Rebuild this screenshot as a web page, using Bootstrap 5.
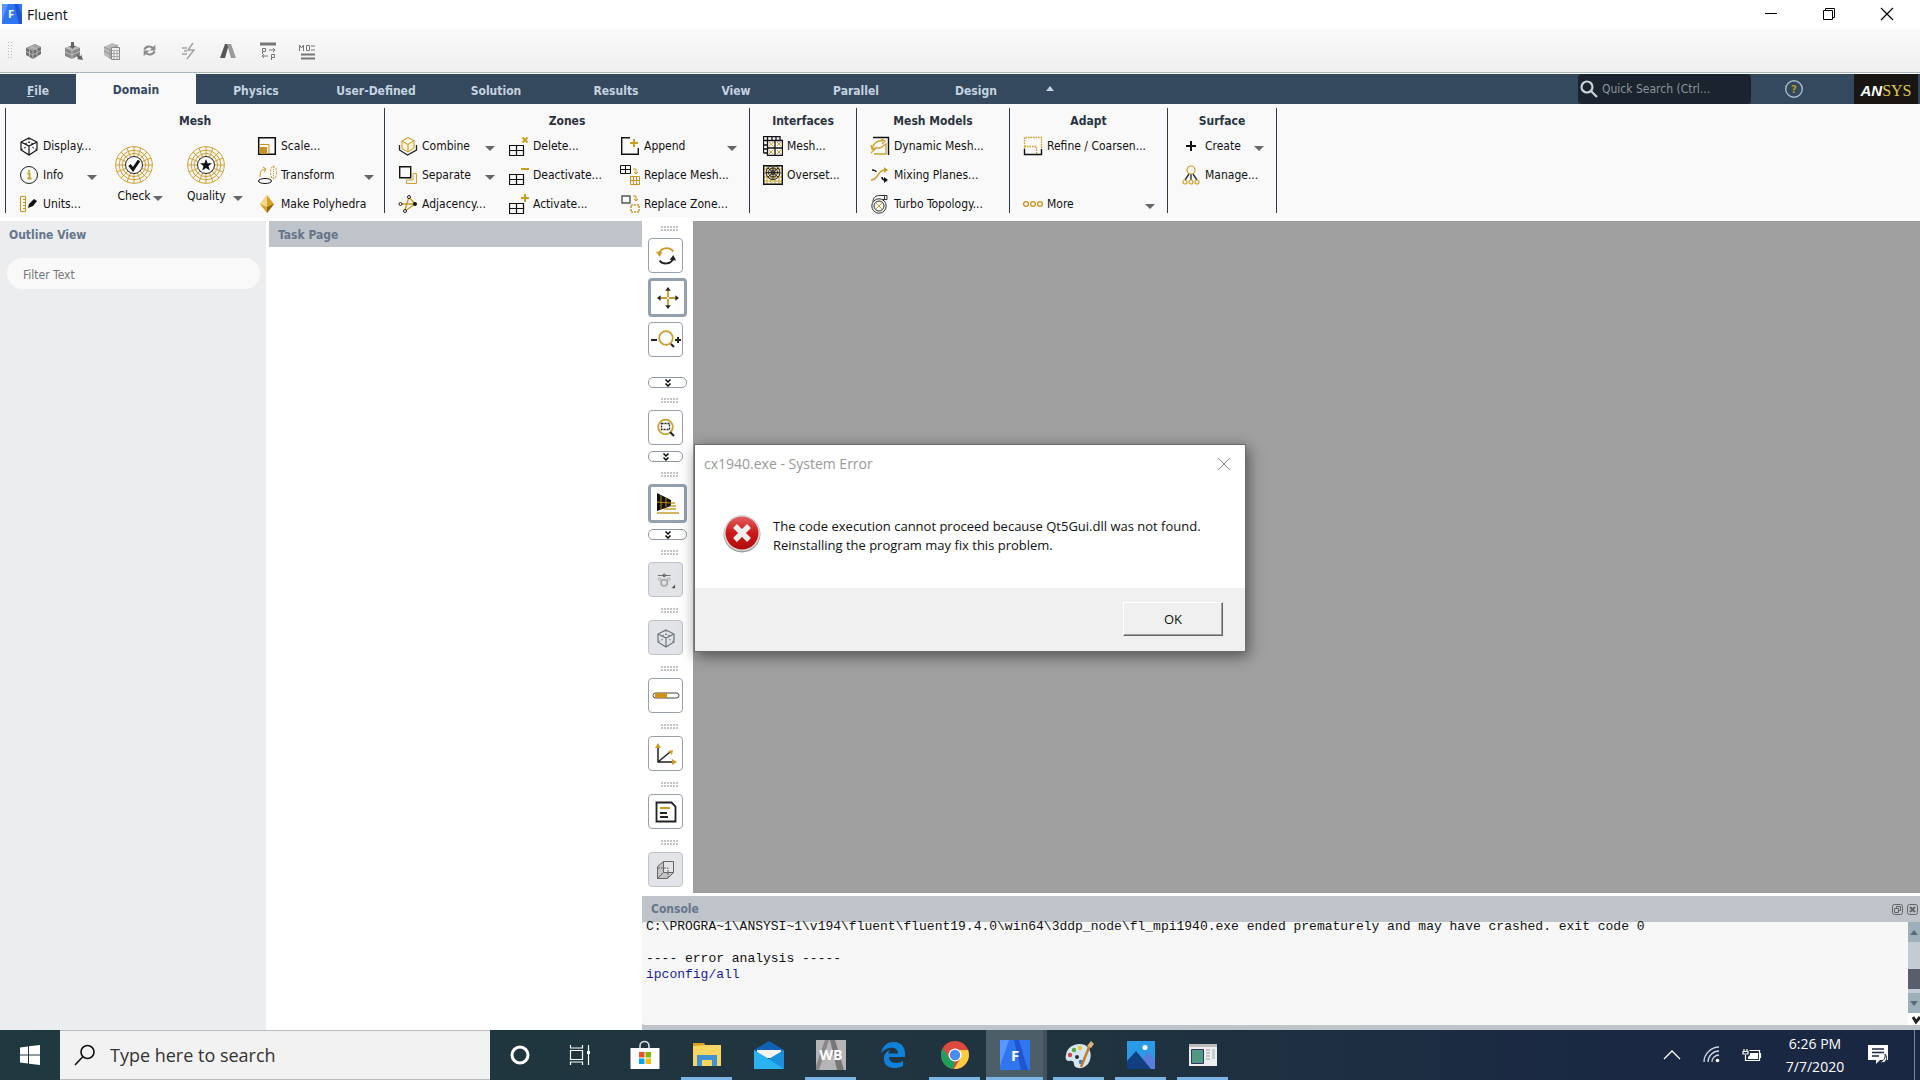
<!DOCTYPE html>
<html lang="en">
<head>
<meta charset="utf-8">
<meta name="viewport" content="width=device-width, initial-scale=1">
<title>Fluent</title>
<link href="https://cdn.jsdelivr.net/npm/bootstrap@5.3.0/dist/css/bootstrap.min.css" rel="stylesheet">
<style>
:root{--navy:#34495e;--gold:#c8921c;--ui:"DejaVu Sans Condensed","DejaVu Sans",sans-serif;--win:"Open Sans","Noto Sans",sans-serif}
body{font-family:var(--ui);font-size:12px;line-height:16px;color:#111;background:#fff;height:100vh;overflow:hidden}
button,input{font:inherit;color:inherit}
button{background:none;border:0;padding:0;text-align:left;white-space:nowrap}
svg{display:block;flex:none;fill:none}
a{text-decoration:none}
/* title bar */
.title-bar{height:29px;padding-left:2px;font-family:var(--win);font-size:14px}
.title-text{line-height:20px;padding:5px 0 0 5px}
.win-btn{width:58px;height:28px;display:flex;align-items:center;justify-content:center}
/* quick toolbar */
.quick-bar{height:44px;background:linear-gradient(#fafafa,#efefef);border-bottom:1px solid #a9b5bf;padding-left:3px;margin-bottom:1px}
.quick-bar button{width:39px;color:#8b8b8b}
/* tabs */
.tab-bar{height:30px;background:var(--navy);font-weight:700}
.tab-bar .tab-link{width:120px;height:30px;padding-top:3px;color:#c5d3e0;display:flex;align-items:center;justify-content:center;font-size:12px}
.tab-bar .tab-file{width:76px}
.tab-bar .tab-link.active{background:#f9f9f9;color:var(--navy);padding-top:2px}
.quick-search{width:173px;height:30px;background:#1a232e;border-radius:4px;padding-left:2px;margin-right:33px}
.quick-search input,.task-search input,.filter-box{background:none;border:0;outline:0;min-width:0}
.quick-search input::placeholder{color:#8d949b;opacity:1}
.quick-search input{font-weight:400}
.brand-box{width:64px;height:30px;padding-top:3px;background:#191513;margin:0 2px 0 50px;font:italic 700 15px/30px "Liberation Sans",sans-serif;color:#fff;align-items:center;justify-content:center}
.brand-box span{font:400 16px/30px "Liberation Serif",serif;color:#dcc94b}
/* ribbon */
.ribbon{height:114px;background:#f9f9f9;padding:4px 0 6px 5px;margin-bottom:3px}
.rib-group{border-left:1px solid #2d3948;padding-left:13px;height:105px}
.rib-group h2{font-size:12px;line-height:26px;font-weight:700;color:#2b3340;text-align:center;margin:0 13px 2px 0}
.rib-end{border-left:1px solid #2d3948;height:105px}
.g-mesh{width:379px}.g-zones{width:365px}.g-inter{width:107px}.g-models{width:153px}.g-adapt{width:158px}.g-surf{width:109px}
.rib-col{display:flex;flex-direction:column;gap:9px}
.w-info{width:78px}.w-xform{width:117px}.w-comb{width:97px}
.rib-btn{display:flex;align-items:center;height:20px;gap:4px}
.rib-btn svg.ico{width:20px;height:20px}
.caret-dn{width:0;height:0;border:5px solid transparent;border-top-color:#666;border-bottom:0;margin:5px 0 0 auto}
.big-tools{gap:24px;padding:0 22px 0 18px}
.big-tool{display:grid;grid-template-columns:38px 10px;grid-template-rows:38px 24px;padding-top:10px;align-items:center;height:78px}
.big-tool span{grid-column:1;text-align:center}
.big-tool i{margin-left:0}
.big-tool.q i{margin-left:8px}
.zone-cols{gap:14px}
/* panels */
.panel-title{height:26px;line-height:20px;background:#bfc4cb;color:#66758a;font-weight:700;padding-left:9px;font-size:12px}
.outline{width:266px;background:#ebedef;margin-right:3px}
.outline .panel-title{background:none}
.filter-box{display:block;width:253px;height:31px;background:#f9f9f9;border-radius:16px;margin:11px 0 0 7px;padding:2px 16px 0}
.filter-box::placeholder{color:#777;opacity:1}
.task-page{width:373px}
.tool-strip{width:51px;padding:5px 0 0 6px}
.grip{width:17px;height:6px;margin-left:13px;background:radial-gradient(circle at 1px 1px,#c4c4c4 1px,transparent 1px) 0 0/3px 3px}
.sq{width:35px;height:35px;border:1px solid #98a1ab;border-radius:4px;display:flex;align-items:center;justify-content:center;background:#fff}
.sq.on{width:39px;height:39px;border:3px solid #93a1af}
.sq.off{background:#e3e4e7;border-color:#bfc4ca}
.more-bar{width:39px;height:11px;border:1px solid #8f98a2;border-radius:5px;display:flex;align-items:center;justify-content:center;background:#fff}
.more-bar.sm{width:35px}
.strip-group{display:flex;flex-direction:column;gap:6px;margin-bottom:11px}
.strip-group.multi{margin-bottom:10px}
.strip-group .sq+.sq{margin-top:-1px}
.strip-group.first .more-bar{margin-top:14px}
.canvas-area{background:#a0a0a0;margin-bottom:3px}
/* console */
.console-box{height:134px;background:#bfc4cb;padding-bottom:5px}
.console-box .panel-title{line-height:26px;padding:0 2px 0 9px}
.console-text{background:#f7f7f7;font:13px/16px "Liberation Mono",monospace;margin:0;padding:0 4px;border-radius:3px 0 0 3px;color:#111}
.console-text div{margin-top:-3px;white-space:pre}
.console-text .cmd{color:#1c1c9c}
.scroll-col{width:12px;background:#c3ccd3}
.scroll-col .end{height:20px;background:#9eb0b9;display:flex;align-items:center;justify-content:center}
.scroll-col .thumb{height:20px;background:#595e6e}
/* error dialog */
.err-dialog{position:absolute;left:1px;top:223px;width:552px;height:208px;background:#fff;border:1px solid #6d6d6d;box-shadow:2px 4px 14px rgba(0,0,0,.5);font-family:var(--win)}
.err-head{height:38px;padding:0 14px 0 9px;font-size:14px;color:#999}
.err-msg{height:105px;padding:30px 0 0 28px;font-size:13px;line-height:19px;color:#111}
.err-foot{background:#f0f0f0;padding:14px 22px 0 0}
.err-foot button{width:100px;height:34px;text-align:center;font-size:13px;background:#f0f0f0;border:1px solid;border-color:#fff #666 #666 #fff;box-shadow:inset -1px -1px #a0a0a0}
/* taskbar */
.win-taskbar{height:50px;background:linear-gradient(90deg,#20383f 0,#20343f 55%,#1a2843 85%,#1a2743);font-family:var(--win);color:#fff}
.win-taskbar button{display:flex;align-items:center;justify-content:center;height:50px;width:62px}
.win-taskbar .w60{width:60px}
.task-search{width:430px;height:50px;background:#f2f2f2;border:1px solid #b9bdc0;border-width:1px 0;padding-left:14px;color:#222}
.task-search input{font-size:18px;width:300px;margin-left:14px}
.task-search input::placeholder{color:#333;opacity:1}
.win-taskbar .run{position:relative}
.win-taskbar .run::after{content:"";position:absolute;left:5px;right:6px;bottom:0;height:3px;background:#7db4e6}
.win-taskbar .cur{background:#4c5e67;width:61px;margin-right:1px;border-right:4px solid #42525c}
.win-taskbar .cur::after{left:0;right:0}
.clock{width:86px;padding-top:2px;font-size:14px;line-height:23px;text-align:center}
.win-taskbar .w40{width:40px}
.show-desk{width:6px;height:50px;border-left:1px solid #7d8696}
</style>
<script src="https://cdn.jsdelivr.net/npm/bootstrap@5.3.0/dist/js/bootstrap.bundle.min.js"></script>
</head>
<body class="d-flex flex-column">

<svg width="0" height="0" class="position-absolute" aria-hidden="true">
  <symbol id="wheel" viewBox="0 0 38 38"><g fill="none" stroke="#d0a030"><circle cx="19" cy="19" r="18.3"/><circle cx="19" cy="19" r="14.8"/><circle cx="19" cy="19" r="11.6"/><path d="M19 .7V10M19 28v9.300M.7 19H10M28 19h9.300M6 6l7 7M25 25l7 7M32 6l-7 7M13 25l-7 7M12 2l3.500 9M26 2l-3.500 9M12 36l3.500-9M26 36l-3.500-9M2 12l9 3.500M2 26l9-3.500M36 12l-9 3.500M36 26l-9-3.500"/></g><circle cx="19" cy="19" r="8.500" fill="#fff" stroke="#222"/></symbol>
  <symbol id="grid4" viewBox="0 0 20 20"><path d="M.5 9.500h14v10H.5zM7.500 9.500v10M.5 14.500h14" fill="none" stroke="#111" stroke-width="1.200"/></symbol>
  <symbol id="chev2" viewBox="0 0 8 8"><path d="M1.500 .5L4 3 6.500.5M1.500 4.500L4 7l2.500-2.500" fill="none" stroke="#000" stroke-width="1.500"/></symbol>
  <symbol id="cube" viewBox="0 0 20 20"><path d="M10 2l8 4v8l-8 5-8-5V6zM2 6l8 4 8-4M10 10v9" fill="none" stroke="currentColor" stroke-width="1.200"/><path d="M10 2v5M2 14l5-3M18 14l-5-3M6 8l4-2 4 2" fill="none" stroke="currentColor" stroke-dasharray="2 1.500"/></symbol>
</svg>

<header class="title-bar d-flex align-items-start">
  <svg class="mt-1" width="20" height="20" viewBox="0 0 20 20"><path fill="#2f76f0" d="M0 0h20v20H0z"/><path fill="#5a97fa" d="M0 0h6L0 17z"/><path fill="#1f55cf" d="M12 0h4l4 12v8h-3z"/><text x="6" y="14" font-family="Open Sans" font-weight="700" font-size="11" fill="#fff">F</text></svg>
  <span class="title-text flex-grow-1">Fluent</span>
  <button class="win-btn" aria-label="Minimize"><svg width="14" height="14"><path d="M1 6.500h12" stroke="#000"/></svg></button>
  <button class="win-btn" aria-label="Restore"><svg width="14" height="14"><path d="M1.500 3.500h9v9h-9zM3.500 3.500v-2h9v9h-2" stroke="#000"/></svg></button>
  <button class="win-btn me-1" aria-label="Close"><svg width="14" height="14"><path d="M1 1l12 12M13 1L1 13" stroke="#000" stroke-width="1.200"/></svg></button>
</header>

<nav class="quick-bar d-flex align-items-center" aria-label="Quick toolbar">
  <svg class="me-2 ms-1" width="6" height="18"><path d="M1.500 0v18M4.500 0v18" stroke="#bbb" stroke-dasharray="1 2"/></svg>
  <button class="ps-1" aria-label="Mesh"><svg width="18" height="18" viewBox="0 0 18 18"><path fill="#6f6f6f" d="M1 6l9-4 6 3v7l-8 5-7-4z"/><path fill="#a5a5a5" d="M1 6l9-4 6 3-8 4z"/><path stroke="#c4c4c4" stroke-width=".8" d="M1 9.500l7 3.500 8-4.500M8 9v8M4.500 7.500v8M12 7v8M5 4l7 3.500"/></svg></button>
  <button class="ps-1" aria-label="Import"><svg width="19" height="18" viewBox="0 0 19 18"><path fill="#888" d="M1 6l8-3 7 3v7l-8 4-7-3z"/><path fill="#bbb" d="M1 6l8-3 7 3-8 3z"/><path stroke="#ccc" stroke-width=".8" d="M1 10l7 3 8-4M8 9v8"/><path fill="#666" d="M7 0h3v4h2L8.500 7 5 4h2zM12 12l5 2v-2l2 6-6-1 1-1z"/></svg></button>
  <button class="ps-1" aria-label="Case"><svg width="18" height="18" viewBox="0 0 18 18"><path fill="#bbb" d="M1 5l8-4 6 2v10l-8 4-6-4z"/><path stroke="#888" stroke-width=".8" d="M1 5l6 3 8-5M7 8v9M1 9l6 3"/><path fill="#eee" stroke="#888" d="M8.500 5.500h8v12h-8z"/><path stroke="#999" stroke-width=".8" d="M8.500 8.500h8M11 9v8M14 9v8M9 11.500h8M9 14.500h8"/></svg></button>
  <button class="ps-1" aria-label="Refresh"><svg width="15" height="15" viewBox="0 0 18 18" stroke="#8b8b8b" stroke-width="2.500"><path d="M3 8c1-4 7-5 10-2M15 10c-1 4-7 5-10 2"/><path fill="#8b8b8b" stroke="none" d="M16 2v7H9zM2 16V9h7z"/></svg></button>
  <button class="ps-1" aria-label="Calculate"><svg width="16" height="18" viewBox="0 0 16 18"><path d="M12 1L7 8h6L6 17M1 6h5M3 9h3M1 12h5" stroke="#a4a4a4" stroke-width="1.500"/></svg></button>
  <button class="ps-1" aria-label="Workbench"><svg width="16" height="18" viewBox="0 0 16 18"><path fill="#555" d="M5 2h4L5 16H0z"/><path fill="#999" d="M7 2h4l5 14h-5z"/></svg></button>
  <button class="ps-1" aria-label="Parameters"><svg width="18" height="18" viewBox="0 0 18 18"><path d="M1 2h16" stroke="#777" stroke-width="3"/><path d="M3.500 12V6.500h3v3h-3M10 8h6M14 6l2 2-2 2M12.500 18v-5.500h3v3h-3M9 14H3M5 12l-2 2 2 2" stroke="#777"/></svg></button>
  <button class="ps-1" aria-label="Monitors"><svg width="18" height="18" viewBox="0 0 18 18"><path d="M1.500 9V3l2 3 2-3v6M8.500 3.500h3v5h-3zM13 4h4M13 8h4" stroke="#777"/><path d="M3 12.500h14M3 16.500h14" stroke="#777" stroke-width="2"/></svg></button>
</nav>

<nav class="tab-bar d-flex align-items-center">
  <a class="tab-link tab-file" href="#"><span><u>F</u>ile</span></a>
  <a class="tab-link active" href="#">Domain</a>
  <a class="tab-link" href="#">Physics</a>
  <a class="tab-link" href="#">User-Defined</a>
  <a class="tab-link" href="#">Solution</a>
  <a class="tab-link" href="#">Results</a>
  <a class="tab-link" href="#">View</a>
  <a class="tab-link" href="#">Parallel</a>
  <a class="tab-link" href="#">Design</a>
  <button class="ms-2 me-auto" aria-label="Collapse ribbon"><svg width="12" height="8"><path fill="#c5d3e0" d="M2 6l4-5 4 5z"/></svg></button>
  <label class="quick-search d-flex align-items-center"><svg width="18" height="18" viewBox="0 0 18 18" stroke="#c9d3dc" stroke-width="2.200"><circle cx="7" cy="7" r="5.500"/><path d="M11 11l6 6"/></svg><input class="ms-1 w-75 p-0" placeholder="Quick Search (Ctrl..." aria-label="Quick Search"></label>
  <button aria-label="Help"><svg width="20" height="20"><circle cx="10" cy="10" r="8.300" stroke="#a9bccd" stroke-width="1.400"/><text x="7" y="14" font-size="11" font-weight="700" fill="#b8962a">?</text></svg></button>
  <div class="brand-box d-flex">AN<span>SYS</span></div>
</nav>

<section class="ribbon d-flex align-items-start">
  <div class="rib-group g-mesh">
    <h2>Mesh</h2>
    <div class="d-flex">
      <div class="rib-col w-info">
        <button class="rib-btn"><svg class="ico"><use href="#cube"/></svg>Display...</button>
        <button class="rib-btn"><svg class="ico" viewBox="0 0 20 20"><circle cx="10" cy="10" r="8.500" stroke="#222"/><path d="M8.500 8.500h2v5M8.500 13.500h4M10 5v2" stroke="#c8a020" stroke-width="1.800"/></svg>Info<i class="caret-dn"></i></button>
        <button class="rib-btn"><svg class="ico" viewBox="0 0 20 20"><path d="M1.500 2.500h5v15h-5zM4 5.500h2.500M4 8.500h2.500M4 11.500h2.500M4 14.500h2.500" stroke="#c8921c"/><path fill="#111" d="M9 14l1-4 5-5 3 2-4 5z"/></svg>Units...</button>
      </div>
      <div class="big-tools d-flex">
      <button class="big-tool"><svg width="38" height="38" viewBox="0 0 38 38"><use href="#wheel"/><path d="M14.500 19l3.500 4.500 6-9" stroke="#111" stroke-width="3"/></svg><span>Check</span><i class="caret-dn"></i></button>
      <button class="big-tool q"><svg width="38" height="38" viewBox="0 0 38 38"><use href="#wheel"/><path fill="#111" d="M19 13l1.600 4.300H25l-3.500 2.800 1.300 4.400L19 22l-3.800 2.500 1.300-4.400L13 17.300h4.400z"/></svg><span>Quality</span><i class="caret-dn"></i></button>
      </div>
      <div class="rib-col w-xform">
        <button class="rib-btn"><svg class="ico" viewBox="0 0 20 20"><path d="M1.700 1.700h16.600v16.600H1.700z" stroke="#111" stroke-width="1.500"/><path d="M3 8.500h9V17" stroke="#c8921c"/><path fill="#c8921c" d="M3 11h7v7H3z"/></svg>Scale...</button>
        <button class="rib-btn"><svg class="ico" viewBox="0 0 20 20"><ellipse cx="8" cy="16" rx="6.500" ry="2.500" stroke="#111"/><path d="M3 12c0-5 1-7 5-8M6 2l3 2-2 3" stroke="#c8921c"/><ellipse cx="16.500" cy="7.500" rx="3" ry="6.500" stroke="#c8921c" stroke-dasharray="2 1.200"/><path d="M16.500 2v11" stroke="#c8921c" stroke-dasharray="1 1"/></svg>Transform<i class="caret-dn"></i></button>
        <button class="rib-btn"><svg class="ico" viewBox="0 0 20 20"><path fill="#d9a327" d="M10 1l7 9-7 9-7-9z"/><path fill="#f3d98e" d="M10 1v12L3 10z"/><path fill="#8c640f" d="M10 13l7-3-7 9z"/></svg>Make Polyhedra</button>
      </div>
    </div>
  </div>

  <div class="rib-group g-zones">
    <h2>Zones</h2>
    <div class="zone-cols d-flex">
      <div class="rib-col w-comb">
        <button class="rib-btn"><svg class="ico" viewBox="0 0 20 20"><path d="M1.500 9v5l8 5 9-5V9M1.500 14" stroke="#222" stroke-width="1.300"/><path fill="#fff6dd" stroke="#c8921c" d="M4 5l6-3.500 6 3V12l-6 4-6-3.500zM4 5l6 3.500 6-4M10 8.500V16"/></svg>Combine<i class="caret-dn"></i></button>
        <button class="rib-btn"><svg class="ico" viewBox="0 0 20 20"><path d="M1.700 1.700h11v11h-11z" stroke="#111" stroke-width="1.400"/><path d="M15 8.500h3.500v10h-10V15H15z" stroke="#d0a030"/></svg>Separate<i class="caret-dn"></i></button>
        <button class="rib-btn"><svg class="ico" viewBox="0 0 20 20"><path d="M3 10h13M11 3L7 16M11 3l6 7-10 7" stroke="#c8921c" stroke-width="1.300"/><g stroke="#222" fill="#fff"><circle cx="11" cy="3" r="1.500"/><circle cx="2.500" cy="10" r="1.500"/><circle cx="7" cy="17" r="1.500"/></g><circle cx="17" cy="10" r="2" fill="#111"/></svg>Adjacency...</button>
      </div>
      <div class="rib-col w-comb">
        <button class="rib-btn"><svg class="ico" viewBox="0 0 20 20"><use href="#grid4"/><path d="M13.500 1.500l5 5M18.500 1.500l-5 5" stroke="#c8a020" stroke-width="2"/></svg>Delete...</button>
        <button class="rib-btn"><svg class="ico" viewBox="0 0 20 20"><use href="#grid4"/><path d="M12 4h8" stroke="#c8a020" stroke-width="2"/></svg>Deactivate...</button>
        <button class="rib-btn"><svg class="ico" viewBox="0 0 20 20"><use href="#grid4"/><path d="M12 4h8M16 0v8" stroke="#c8a020" stroke-width="2"/></svg>Activate...</button>
      </div>
      <div class="rib-col w-xform">
        <button class="rib-btn"><svg class="ico" viewBox="0 0 20 20"><path d="M10 1.700H1.700v16.600h16.600V12" stroke="#111" stroke-width="1.400"/><path d="M10 7h8M14 3v8" stroke="#c8a020" stroke-width="2"/></svg>Append<i class="caret-dn"></i></button>
        <button class="rib-btn"><svg class="ico" viewBox="0 0 20 20"><path d="M.5.500h10v8H.5zM5.500.500v8M.5 4.500h10" stroke="#111"/><path d="M10.500 11.500h9v8h-9zM13.500 11.500v8M16.500 11.500v8M10.500 15.500h9M13 4h3v4M14 7l2 2 2-2" stroke="#c8921c"/></svg>Replace Mesh...</button>
        <button class="rib-btn"><svg class="ico" viewBox="0 0 20 20"><path d="M2 2h8v7H2z" stroke="#555" stroke-width="1.400"/><path d="M13 2h3v4M14 5l2 2 2-2" stroke="#c8921c"/><path d="M11 11h8v7h-8z" stroke="#c8921c" stroke-width="1.500" stroke-dasharray="2 1"/></svg>Replace Zone...</button>
      </div>
    </div>
  </div>

  <div class="rib-group g-inter">
    <h2>Interfaces</h2>
    <div class="rib-col">
      <button class="rib-btn"><svg class="ico" viewBox="0 0 20 20"><path d="M4.500 4.500h15v15h-15zM12 4.500v15M4.500 12h15M.5 17V.5H17v4M.5 4.500h4M.5 9h4M.5 13h4v4H.5M4.500.5v4M9 .5v4M13 .5v4" stroke="#111" stroke-width="1.300"/><path d="M6 6l4.500 4.500M10.500 6L6 10.500M14 6l4 4M18 6l-4 4M6 14l4 4M10 14l-4 4M14 14l4 4M18 14l-4 4" stroke="#d0a030"/></svg>Mesh...</button>
      <button class="rib-btn"><svg class="ico" viewBox="0 0 20 20"><path d="M1 4h18M1 8h18M1 12h18M1 16h18M4 1v18M8 1v18M12 1v18M16 1v18" stroke="#c8a020"/><path d="M.7.7h18.600v18.600H.7z" stroke="#111" stroke-width="1.400"/><g stroke="#222"><circle cx="10" cy="7.500" r="7"/><circle cx="10" cy="7.500" r="4.500"/><circle cx="10" cy="7.500" r="2"/><path d="M10 1v14M3 7.500h14M5 3l10 9M15 3L5 12"/></g></svg>Overset...</button>
    </div>
  </div>

  <div class="rib-group g-models">
    <h2>Mesh Models</h2>
    <div class="rib-col">
      <button class="rib-btn"><svg class="ico" viewBox="0 0 20 20"><path d="M3 1.500h15.500V19" stroke="#111" stroke-width="1.400"/><path d="M1 17l5-5h4l6-4v10H4M2 12c2-5 6-8 11-7M11 2.500l4 2.500-3 3M1 9l1 4 4-1" stroke="#d0a030" stroke-width="1.300"/></svg>Dynamic Mesh...</button>
      <button class="rib-btn"><svg class="ico" viewBox="0 0 20 20"><path d="M1 15c8 0 6-10 14-10" stroke="#d0a030" stroke-width="1.500"/><path fill="#c8a020" d="M14 2l4 3-4 3z"/><path d="M2 5c2 0 4 1 4 2M12 12c0 2 1 3 3 3" stroke="#111" stroke-width="1.500"/><path fill="#111" d="M14 12l4 3-4 3z"/></svg>Mixing Planes...</button>
      <button class="rib-btn"><svg class="ico" viewBox="0 0 20 20" stroke="#333"><circle cx="9" cy="12" r="7.200"/><circle cx="9" cy="12" r="5"/><path d="M3 8c0-5 3-6.500 7-6.500h7v4h-5M14.500 1.500v4"/><path d="M6 9l6 6M12 9l-6 6" stroke="#d0a030"/></svg>Turbo Topology...</button>
    </div>
  </div>

  <div class="rib-group g-adapt">
    <h2>Adapt</h2>
    <div class="rib-col pe-2 me-1">
      <button class="rib-btn"><svg class="ico" viewBox="0 0 20 20"><path d="M1.500 13V1.500h17V13M1.500 10.500h12V18" stroke="#c8a020" stroke-width="1.300" stroke-dasharray="1.500 1"/><path d="M1.500 13v5.500h17V13" stroke="#111" stroke-width="1.400"/></svg>Refine / Coarsen...</button>
      <span class="rib-btn"></span>
      <button class="rib-btn"><svg class="ico" viewBox="0 0 20 20" stroke="#c8921c" stroke-width="1.300"><circle cx="3" cy="10" r="2.400"/><circle cx="10" cy="10" r="2.400"/><circle cx="17" cy="10" r="2.400"/></svg>More<i class="caret-dn"></i></button>
    </div>
  </div>

  <div class="rib-group g-surf">
    <h2>Surface</h2>
    <div class="rib-col pe-2 me-1">
      <button class="rib-btn"><svg class="ico" viewBox="0 0 20 20"><path d="M5 10h10M10 5v10" stroke="#111" stroke-width="2"/></svg>Create<i class="caret-dn"></i></button>
      <button class="rib-btn"><svg class="ico" viewBox="0 0 20 20"><path d="M8 9l-4 6M10 9v6M12 9l4 6" stroke="#333" stroke-width="1.400"/><g stroke="#d0a030" stroke-width="1.200"><circle cx="10" cy="5" r="4"/><circle cx="4" cy="17" r="2"/><circle cx="10" cy="17" r="2"/><circle cx="16" cy="17" r="2"/></g></svg>Manage...</button>
    </div>
  </div>
  <div class="rib-end"></div>
</section>

<main class="d-flex flex-grow-1 overflow-hidden">
  <aside class="outline">
    <div class="panel-title pt-1">Outline View</div>
    <input class="filter-box" placeholder="Filter Text" aria-label="Filter Text">
  </aside>
  <section class="task-page"><div class="panel-title pt-1">Task Page</div></section>

  <div class="d-flex flex-column flex-grow-1">
    <div class="d-flex flex-grow-1">
      <div class="tool-strip">
        <div class="strip-group multi first">
          <div class="grip"></div>
          <button class="sq" aria-label="Rotate"><svg width="22" height="22" viewBox="0 0 24 24" stroke-width="2"><path d="M4 10c2-7 11-9 16-3" stroke="#d09a2a"/><path fill="#d09a2a" d="M1 7l4 6 3-5z"/><path d="M5 17c4 5 12 4 15-2" stroke="#222"/><path fill="#222" d="M23 17l-3-6-4 5z"/></svg></button>
          <button class="sq on" aria-label="Pan"><svg width="22" height="22" viewBox="0 0 24 24"><path d="M12 4v16M4 12h16" stroke="#d09a2a" stroke-width="2"/><path fill="#222" d="M12 0l3 4H9zM12 24l3-4H9zM0 12l4-3v6zM24 12l-4-3v6z"/><path fill="#fff" d="M11 11h2v2h-2z"/></svg></button>
          <button class="sq" aria-label="Zoom"><svg width="30" height="24" viewBox="0 0 30 24"><circle cx="15" cy="10" r="6.800" stroke="#c8a030" stroke-width="1.800"/><path d="M20 16l3 3M0 12h6M24 12h6M27 9v6" stroke="#222" stroke-width="2"/></svg></button>
          <button class="more-bar" aria-label="More"><svg width="8" height="8"><use href="#chev2"/></svg></button>
        </div>
        <div class="strip-group multi">
          <div class="grip"></div>
          <button class="sq" aria-label="Zoom to fit"><svg width="20" height="20" viewBox="0 0 20 20"><circle cx="9.500" cy="9" r="7.300" stroke="#c8a030" stroke-width="1.800"/><path d="M5.500 5.500h8v6h-8z" stroke="#222" stroke-width="1.300" stroke-dasharray="2 1"/><path d="M14 14l4 4" stroke="#222" stroke-width="2"/></svg></button>
          <button class="more-bar sm" aria-label="More"><svg width="8" height="8"><use href="#chev2"/></svg></button>
        </div>
        <div class="strip-group multi">
          <div class="grip"></div>
          <button class="sq on" aria-label="Views"><svg width="24" height="22" viewBox="0 0 24 22"><path fill="#111" d="M1 0l14 7v6L1 18z"/><path d="M1 9l14 1M5 2v15M10 5v9" stroke="#b8861c"/><path d="M15 10h4M14 13h6M8 16h12M1 20h22" stroke="#c8a030" stroke-width="1.300"/></svg></button>
          <button class="more-bar" aria-label="More"><svg width="8" height="8"><use href="#chev2"/></svg></button>
        </div>
        <div class="strip-group"><div class="grip"></div>
          <button class="sq off" aria-label="Select"><svg width="20" height="20" viewBox="0 0 22 22" stroke="#aaa"><path d="M2 6h14" stroke="#666"/><circle cx="9" cy="6" r="1.500" stroke="#555"/><circle cx="9" cy="14" r="3.500" stroke-width="2"/><circle cx="4" cy="10" r="1.500"/><circle cx="14" cy="10" r="1.500"/><path fill="#555" stroke="none" d="M21 16v4h-4z"/></svg></button></div>
        <div class="strip-group"><div class="grip"></div>
          <button class="sq off text-secondary" aria-label="Cube"><svg width="20" height="20"><use href="#cube"/></svg></button></div>
        <div class="strip-group"><div class="grip"></div>
          <button class="sq" aria-label="Progress"><svg width="28" height="8" viewBox="0 0 28 8"><rect x="1" y="1" width="26" height="5" rx="2.500" fill="#fff" stroke="#444"/><path fill="#c8921c" d="M3 1h12v5H3z"/></svg></button></div>
        <div class="strip-group"><div class="grip"></div>
          <button class="sq" aria-label="Axes"><svg width="22" height="22" viewBox="0 0 22 22"><path d="M3 4v15h14M3 19L15 9" stroke="#222" stroke-width="1.500"/><path fill="#d09a2a" d="M3 0l3 5H0zM22 19l-5 3v-6zM18 7l-1 5-4-4z"/></svg></button></div>
        <div class="strip-group"><div class="grip"></div>
          <button class="sq" aria-label="Report"><svg width="22" height="22" viewBox="0 0 22 22"><path d="M1.500 1.500h15l4 4v15h-19z" stroke="#222" stroke-width="1.800"/><path d="M5 7h10" stroke="#d09a2a" stroke-width="2"/><path d="M5 12h7M5 16h8" stroke="#222" stroke-width="1.800"/></svg></button></div>
        <div class="strip-group mb-0"><div class="grip"></div>
          <button class="sq off" aria-label="Box"><svg width="20" height="20" viewBox="0 0 20 20" stroke="#666"><path fill="#c4c4c6" stroke="none" d="M1.500 6.500l6-5v11l-6 6zM1.500 18.500l6-6h10l-6 6z"/><path d="M7.500 1.500h10v11h-10zM7.500 1.500l-6 5v12h10l6-6M1.500 18.500l6-6"/><path d="M2 8h10v10" stroke-dasharray="2 1"/></svg></button></div>
      </div>

      <div class="canvas-area flex-grow-1 position-relative">
        <div class="err-dialog d-flex flex-column" role="dialog" aria-label="System Error">
          <div class="err-head d-flex align-items-center justify-content-between"><span>cx1940.exe - System Error</span>
            <button aria-label="Close"><svg width="14" height="14"><path d="M1 1l12 12M13 1L1 13" stroke="#888"/></svg></button></div>
          <div class="err-msg d-flex">
            <svg class="me-2" width="38" height="40" viewBox="0 0 38 40"><defs><linearGradient id="rg" x2="0" y2="1"><stop stop-color="#e06060"/><stop offset=".5" stop-color="#cc1818"/><stop offset="1" stop-color="#b00c0c"/></linearGradient></defs><circle cx="19" cy="21" r="18.500" fill="#999"/><circle cx="19" cy="20" r="18" fill="#ddd"/><circle cx="19" cy="20" r="16.500" fill="url(#rg)"/><path d="M12 13l14 14M26 13L12 27" stroke="#eee" stroke-width="5.500"/></svg>
            <div class="ps-1 pt-1">The code execution cannot proceed because Qt5Gui.dll was not found.<br>Reinstalling the program may fix this problem.</div>
          </div>
          <div class="err-foot flex-grow-1 d-flex justify-content-end align-items-start"><button>OK</button></div>
        </div>
      </div>
    </div>

    <section class="console-box d-flex flex-column">
      <div class="panel-title d-flex align-items-center"><span class="me-auto">Console</span>
        <button class="me-1" aria-label="Float"><svg width="11" height="11" stroke="#666"><rect x=".5" y=".5" width="10" height="10" rx="2"/><path d="M2.500 4.500h4v4h-4zM4.500 4V2.500h4v4H7"/></svg></button>
        <button aria-label="Close"><svg width="11" height="11" stroke="#666"><rect x=".5" y=".5" width="10" height="10" rx="2"/><path d="M3 3l5 5M8 3L3 8" stroke-width="2"/></svg></button></div>
      <div class="d-flex flex-grow-1">
        <div class="console-text flex-grow-1"><div>C:\PROGRA~1\ANSYSI~1\v194\fluent\fluent19.4.0\win64\3ddp_node\fl_mpi1940.exe ended prematurely and may have crashed. exit code 0

---- error analysis -----
<span class="cmd">ipconfig/all</span></div></div>
        <div class="scroll-col d-flex flex-column">
          <span class="end"><svg width="8" height="5"><path fill="#5b6c78" d="M0 5l4-5 4 5z"/></svg></span>
          <span class="flex-grow-1"></span><span class="thumb mb-1"></span>
          <span class="end"><svg width="8" height="5"><path fill="#5b6c78" d="M0 0l4 5 4-5z"/></svg></span>
          <span class="bg-white"><svg width="12" height="12"><path d="M5 4l3 5 4-5" stroke="#222" stroke-width="3"/></svg></span>
        </div>
      </div>
    </section>
  </div>
</main>

<footer class="win-taskbar d-flex">
  <button class="w60" aria-label="Start"><svg width="20" height="20" viewBox="0 0 20 20"><path fill="#fff" d="M0 2.500L8 1.500v8H0zM9 1.300L20 0v9.500H9zM0 10.500h8v8L0 17.500zM9 10.500h11V20L9 18.700z"/></svg></button>
  <label class="task-search d-flex align-items-center"><svg width="22" height="22" viewBox="0 0 22 22" stroke="#111" stroke-width="1.600"><circle cx="13.500" cy="8" r="6.500"/><path d="M9 12.500L1 21"/></svg><input class="p-0" placeholder="Type here to search" aria-label="Type here to search"></label>
  <button class="w60" aria-label="Cortana"><svg width="20" height="20"><circle cx="10" cy="10" r="8" stroke="#fff" stroke-width="3"/></svg></button>
  <button class="w60" aria-label="Task view"><svg width="22" height="20" viewBox="0 0 22 20" stroke="#fff" stroke-width="1.200"><path d="M1.500 5.500h12v9h-12zM1.500 0v3h12V0M1.500 20v-3h12v3M19.500 0v20"/><path fill="#fff" stroke="none" d="M18 6h3v3h-3z"/></svg></button>
  <button class="ms-1" aria-label="Store"><svg width="30" height="30" viewBox="0 0 30 30"><path d="M10 9V6c0-6 9-6 9 0v3" stroke="#ddd" stroke-width="1.600"/><path fill="#fff" d="M.5 8h29v21H.5z"/><path fill="#e8512a" d="M9 12h5.500v5.500H9z"/><path fill="#7fba00" d="M15.500 12H21v5.500h-5.500z"/><path fill="#00a4ef" d="M9 18.500h5.500V24H9z"/><path fill="#ffb900" d="M15.500 18.500H21V24h-5.500z"/></svg></button>
  <button class="run" aria-label="File Explorer"><svg width="28" height="26" viewBox="0 0 28 26"><path fill="#d9a11e" d="M0 1h11l2 3H0z"/><path fill="#fbd562" d="M0 4l13-1h15v21H0z"/><path fill="#3f93d0" d="M4 13h20v11h-5v-6H9v6H4z"/></svg></button>
  <button aria-label="Mail"><svg width="30" height="28" viewBox="0 0 30 28"><path fill="#1161b5" d="M0 9l15-9 15 9v5H0z"/><path fill="#f4f4f4" d="M3 9h24v8H3z"/><path fill="#2bb2f0" d="M0 9l15 9 15-9v19H0z"/><path fill="#1a8fde" d="M30 9v19L13 17l2 1z"/></svg></button>
  <button class="run" aria-label="Workbench"><svg width="30" height="30" viewBox="0 0 30 30"><path fill="#b5b5b5" d="M0 0h30v30H0z"/><path fill="#888" d="M9 0h4L3 30H0v-4z"/><path fill="#777" d="M14 0h5l9 30h-7z"/><text x="15" y="20" text-anchor="middle" font-family="Open Sans" font-weight="700" font-size="14" fill="#fff">WB</text></svg></button>
  <button aria-label="Edge"><svg width="26" height="26" viewBox="0 0 26 26"><path fill="#1180d8" d="M1 11C3 3 8 0 14 0c7 0 11 5 11 11v4H9c0 7 9 7 14 4v5C15 28 3 26 4 16c0-4 3-7 6-8-1 1-1.500 2-1.500 3.500h9.500C18 4 7 4 1 11z"/></svg></button>
  <button class="run" aria-label="Chrome"><svg width="28" height="28" viewBox="0 0 28 28"><circle cx="14" cy="14" r="14" fill="#dd4b3e"/><path fill="#1ea05a" d="M2 7l6 10 6 4-2 7A14 14 0 0 1 2 7z"/><path fill="#fccd41" d="M27 9a14 14 0 0 1-14 19l6-10V9z"/><circle cx="14" cy="14" r="6.500" fill="#fff"/><circle cx="14" cy="14" r="5.200" fill="#4a8af4"/></svg></button>
  <button class="run cur" aria-label="Fluent"><svg width="30" height="30" viewBox="0 0 30 30"><path fill="#2f76f0" d="M0 0h30v30H0z"/><path fill="#5a97fa" d="M0 0h9L0 26z"/><path fill="#1f55cf" d="M14 0h5l9 30h-7z"/><text x="15" y="21" text-anchor="middle" font-family="Open Sans" font-weight="700" font-size="15" fill="#fff">F</text></svg></button>
  <button class="run" aria-label="Paint"><svg width="30" height="28" viewBox="0 0 30 28"><path fill="#d5e6ee" d="M2 14C3 5 13 1 21 4c7 4 7 13 3 19-5 6-14 5-14 0 0-3-2-4-5-3-3 0-4-3-3-6z"/><circle cx="6" cy="14" r="2.200" fill="#d64550"/><circle cx="10" cy="9" r="2.200" fill="#5aa84a"/><circle cx="16" cy="7" r="2.200" fill="#e8c23a"/><circle cx="13" cy="16" r="2" fill="#20343f"/><circle cx="17" cy="21" r="2.200" fill="#3a78c8"/><path d="M26 4l-9 22" stroke="#c47a2c" stroke-width="2.500"/><path fill="#d8b27c" d="M23 5l4-5 3 3-3 4z"/></svg></button>
  <button class="run" aria-label="Photos"><svg width="28" height="28" viewBox="0 0 28 28"><path fill="#2b9be8" d="M0 0h28v28H0z"/><path fill="#5a7ddd" d="M12 22L21 11l7 8v9H12z"/><path fill="#123f80" d="M0 20l9-10 15 18H0z"/><circle cx="18" cy="6.500" r="2.500" fill="#fff"/></svg></button>
  <button class="run me-auto" aria-label="Application"><svg width="28" height="22" viewBox="0 0 28 22"><path fill="#eee" d="M0 0h28v22H0z"/><path fill="#bbb" d="M0 0h28v3H0z"/><path fill="#4f9a80" stroke="#336" d="M2.500 5.500h12v14h-12z"/><path d="M17 6h4M17 9h4M17 12h4M17 15h4" stroke="#999"/><path fill="#ccc" d="M23 5h3v10h-3z"/></svg></button>
  <button class="w40" aria-label="Show hidden icons"><svg width="18" height="10"><path d="M1 9l8-8 8 8" stroke="#fff" stroke-width="1.300"/></svg></button>
  <button class="w40" aria-label="Network"><svg width="18" height="18" viewBox="0 0 18 18" stroke="#d0d6e0" stroke-width="1.300"><path d="M1 16C1 8 8 1 16 1M5 16c0-6 5-11 11-11M9 16c0-4 3-7 7-7"/><circle cx="14.500" cy="14.500" r="1.800" fill="#fff" stroke="none"/></svg></button>
  <button class="w40" aria-label="Battery"><svg width="20" height="14" viewBox="0 0 20 14"><path d="M3.500 7v5.500h14v-10h-10M18.500 5v5M1 3.500h5V6H1zM2 1v2M5 1v2" stroke="#fff" stroke-width="1.200"/><path fill="#fff" d="M8 5h8v6H6V9l2-2z"/></svg></button>
  <div class="clock"><div>6:26 PM</div><div>7/7/2020</div></div>
  <button class="w40 me-3" aria-label="Notifications"><svg width="22" height="20" viewBox="0 0 22 20"><path fill="#fff" d="M1 0h20v15h-8l-4 4v-4H1z"/><path d="M5 4h12M5 7.500h12M5 11h7" stroke="#1a2743" stroke-width="1.300"/><path fill="#fff" stroke="#1a2743" d="M18 9c4 5 0 11-6 8 4 0 7-4 6-8z"/></svg></button>
  <div class="show-desk"></div>
</footer>
</body>
</html>
